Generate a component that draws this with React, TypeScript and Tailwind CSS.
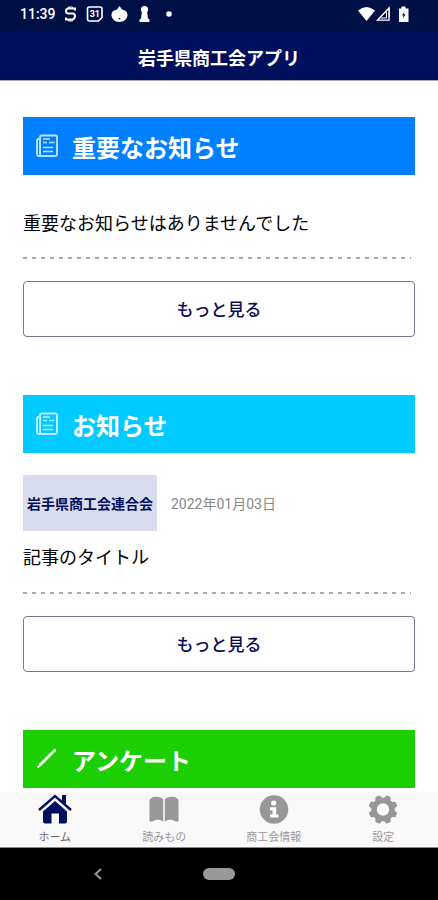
import React from 'react';

const NewsIcon = () => (
  <svg viewBox="0 0 24 24" className="h-6 w-6 shrink-0 opacity-75" fill="none" stroke="white" strokeWidth="1.9" aria-hidden="true">
    <path d="M5 4V3a1.500 1.500 0 0 1 1.500-1.500h14A1.500 1.500 0 0 1 22 3v17.500a1.500 1.500 0 0 1-1.500 1.500H3.500A1.500 1.500 0 0 1 2 20.500V6.500A1.500 1.500 0 0 1 3.500 5H5" />
    <path d="M5 4V22" strokeWidth="2" />
    <path d="M8 5h7M8 8.500h4M14 8.500h5.500M8 13.500h10M8 17.500h10" strokeWidth="1.600" />
  </svg>
);

const PencilIcon = () => (
  <svg viewBox="0 0 24 24" className="h-6 w-6 shrink-0" fill="none" stroke="white" aria-hidden="true">
    <path d="M4.500 18.500L18 5" strokeWidth="2.800" />
    <path d="M19.300 3.700l.2-.2" strokeWidth="3.400" strokeLinecap="round" />
    <path d="M2.500 20.500L5 18.500" strokeWidth="1.800" />
  </svg>
);

const HomeIcon = () => (
  <svg viewBox="0 0 34 32" className="h-8 w-[34px]" fill="#00105f" aria-hidden="true">
    <path d="M17 8L5 18.500V28.500a2 2 0 0 0 2 2h6.500V20.500h7.500V30.500h6a2 2 0 0 0 2-2V18.500z" />
    <path d="M1 17L17 3l16 14" fill="none" stroke="#00105f" strokeWidth="2.400" />
    <path d="M24 2h4v9.500l-4-3.500z" />
  </svg>
);

const BookIcon = () => (
  <svg viewBox="0 0 34 32" className="h-8 w-[34px]" fill="#979797" aria-hidden="true">
    <path d="M2.500 8C3 3 13 2.500 16.200 6.500V28.500c-3-2.500-8-2.500-11 0H2.500z" />
    <path d="M31.500 8C31 3 21 2.500 17.800 6.500V28.500c3-2.500 8-2.500 11 0h2.700z" />
  </svg>
);

const InfoIcon = () => (
  <svg viewBox="0 0 34 32" className="h-8 w-[34px]" aria-hidden="true">
    <circle cx="17" cy="16.500" r="14.300" fill="#979797" />
    <circle cx="16.700" cy="10" r="2.600" fill="white" />
    <path d="M13 14.300h6.200v7.200H21.500V24.500h-8.500v-3h2.500v-4.200H13z" fill="white" />
  </svg>
);

const teeth = [22.5, 67.5, 112.5, 157.5, 202.5, 247.5, 292.5, 337.5];

const GearIcon = () => (
  <svg viewBox="0 0 34 32" className="h-8 w-[34px]" fill="#979797" aria-hidden="true">
    <circle cx="17" cy="16.500" r="9" fill="none" stroke="#979797" strokeWidth="5.600" />
    {teeth.map((angle) => (
      <path key={angle} d="M13.300 6.500l1-3.500q.3-1 1-1h3.400q.7 0 1 1l1 3.500z" transform={`rotate(${angle} 17 16.5)`} />
    ))}
  </svg>
);

const StatusBar = () => (
  <div className="flex h-8 items-center justify-between bg-[#000f45] pb-1 pl-5 pr-7 text-white">
    <div className="flex h-full items-center">
      <span className="w-9 whitespace-nowrap font-[Roboto] text-sm font-medium leading-5">11:39</span>
      <svg viewBox="0 0 112 20" className="ml-1 h-5 w-28" fill="none" stroke="white" aria-hidden="true">
        <path d="M15 6.500V4.500H8.500q-2.500 0-2.500 2.500t2.500 2.500h4q2.500 0 2.500 2.500t-2.500 3.500H6v-2" strokeWidth="2" />
        <path d="M8.500 4V3h4v1M8.500 16v1h4v-1" strokeWidth="1" />
        <path d="M29.500 3h10.500q2 0 2 2V13.500l-3.500 3.500H29.500q-2 0-2-2V5q0-2 2-2z" strokeWidth="1.600" />
        <text x="34.800" y="13.200" textAnchor="middle" fill="white" stroke="none" fontFamily="Roboto, sans-serif" fontSize="9" fontWeight="700">31</text>
        <path d="M59.500 2l2.500 3.500c3.500.5 5.500 2.500 5.500 5.500 0 3.500-3.200 7-8 7s-8-3.500-8-7c0-3 2-5 5.500-5.500z" fill="white" stroke="none" />
        <path d="M58.300 14h2.400l-1.200 1.800z" fill="#000f45" stroke="none" />
        <circle cx="84.500" cy="5.500" r="3.600" fill="white" stroke="none" />
        <path d="M82 7.500h5l1 7 1.500 1V18h-10v-2.500l1.500-1z" fill="white" stroke="none" />
        <circle cx="109" cy="10" r="2.800" fill="white" stroke="none" />
      </svg>
    </div>
    <svg viewBox="0 0 54 20" className="h-5 w-[54px]" fill="white" aria-hidden="true">
      <path d="M2 6.500Q10.500-.5 19 6.500L10.500 17z" />
      <path d="M21.500 16.200h11.500V4z" fill="none" stroke="white" strokeWidth="1.300" />
      <path d="M30.500 8v6h-5.500M33.300 4v9" fill="none" stroke="white" strokeWidth="1" />
      <path d="M43 4.500h2.500V2.500h4v2H52.500v13.500H43z" />
      <path d="M48.300 8L46 11.500h1.500l-.5 3 2.500-4h-1.500z" fill="#000f45" />
    </svg>
  </div>
);

const SectionTitle = ({ color, icon, children }: { color: string; icon: React.ReactNode; children: React.ReactNode }) => (
  <div className={`flex h-[58px] items-center gap-[13px] pl-3 ${color}`}>
    {icon}
    <h2 className="pt-[2px] text-2xl font-bold leading-8 text-white">{children}</h2>
  </div>
);

const Divider = () => (
  <div className="mr-1 h-[2px] bg-[repeating-linear-gradient(90deg,#aaaaaa_0px,#aaaaaa_4px,transparent_4px,transparent_9px)]" />
);

const MoreButton = () => (
  <button type="button" className="mt-[22px] h-14 w-full rounded-[4px] border border-[#77778f] bg-white text-[17px] font-medium leading-6 text-[#0b0b55]">
    もっと見る
  </button>
);

const tabs = [
  { label: 'ホーム', Icon: HomeIcon, active: true },
  { label: '読みもの', Icon: BookIcon, active: false },
  { label: '商工会情報', Icon: InfoIcon, active: false },
  { label: '設定', Icon: GearIcon, active: false },
];

const App = () => {
  return (
    <div className="flex h-screen flex-col bg-white font-['Noto_Sans_CJK_JP',sans-serif] text-black">
      <header className="shrink-0">
        <StatusBar />
        <div className="flex h-[49px] items-center justify-center border-b border-[#a9a9c4] bg-[#00105c] pt-[2px]">
          <h1 className="text-lg font-bold leading-6 text-white">岩手県商工会アプリ</h1>
        </div>
      </header>

      <main className="min-h-0 flex-1 overflow-hidden px-[23px] pt-9">
        <section>
          <SectionTitle color="bg-[#0080ff]" icon={<NewsIcon />}>重要なお知らせ</SectionTitle>
          <p className="mb-[22px] mt-[34px] text-lg leading-[26px]">重要なお知らせはありませんでした</p>
          <Divider />
          <MoreButton />
        </section>

        <section className="mt-[58px]">
          <SectionTitle color="bg-[#00caff]" icon={<NewsIcon />}>お知らせ</SectionTitle>
          <article className="mb-[26px] mt-[22px]">
            <div className="flex items-center gap-[14px]">
              <span className="flex h-14 w-[134px] items-center justify-center whitespace-nowrap bg-[#d9dcec] text-sm font-bold text-[#00105f]">
                岩手県商工会連合会
              </span>
              <time dateTime="2022-01-03" className="pt-[2px] font-[Roboto,'Noto_Sans_CJK_JP',sans-serif] text-sm text-[#888888]">
                2022年01月03日
              </time>
            </div>
            <h3 className="mt-[15px] text-lg leading-5">記事のタイトル</h3>
          </article>
          <Divider />
          <MoreButton />
        </section>

        <section className="mt-[58px]">
          <SectionTitle color="bg-[#1bcf03]" icon={<PencilIcon />}>アンケート</SectionTitle>
        </section>
      </main>

      <nav className="grid h-14 shrink-0 grid-cols-4 border-b border-[#8a8a8a] bg-[#f9f9f9]">
        {tabs.map(({ label, Icon, active }) => (
          <a key={label} href="#" aria-current={active ? 'page' : undefined} className="flex flex-col items-center pt-px">
            <Icon />
            <span className={`mt-[3px] text-[11px] leading-4 ${active ? 'text-[#666677]' : 'text-[#999999]'}`}>{label}</span>
          </a>
        ))}
      </nav>

      <div className="grid h-[52px] shrink-0 grid-cols-[1fr_32px_1fr] items-center bg-black">
        <button type="button" aria-label="戻る" className="mr-2 justify-self-center">
          <svg viewBox="0 0 12 14" className="h-[14px] w-3" fill="none" stroke="#999999" strokeWidth="2" aria-hidden="true">
            <path d="M9 2L3.500 7 9 12" />
          </svg>
        </button>
        <button type="button" aria-label="ホーム画面" className="h-3 rounded-full bg-[#999999]" />
      </div>
    </div>
  );
};

export default App;
